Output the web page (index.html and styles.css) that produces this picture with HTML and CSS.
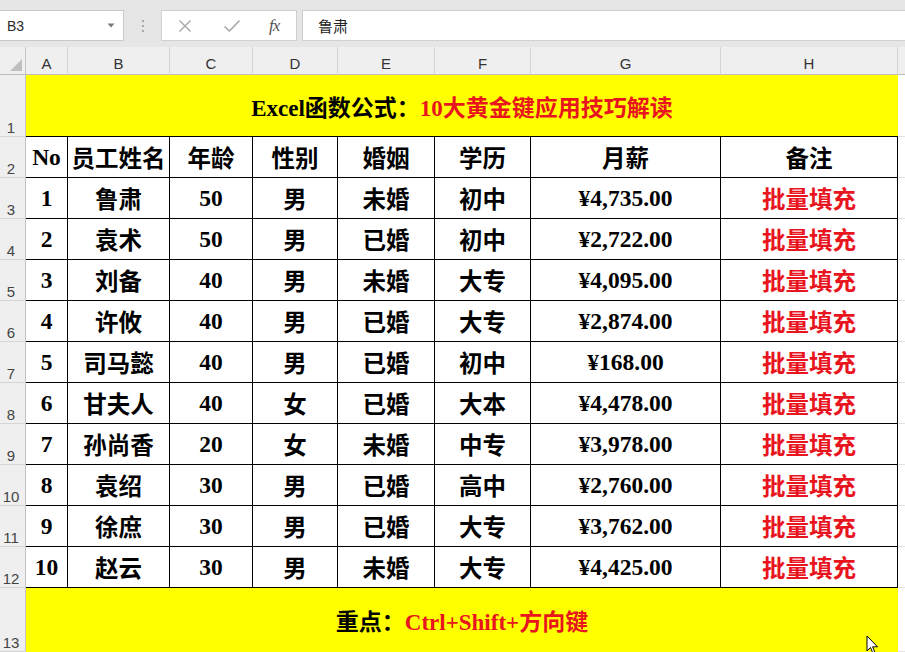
FILE: index.html
```html
<!DOCTYPE html>
<html lang="zh">
<head>
<meta charset="utf-8">
<title>Excel</title>
<link rel="stylesheet" href="styles.css">
</head>
<body>
<div class="app">
  <div class="toolbar">
    <div class="namebox"><span>B3</span>
      <svg width="8" height="5" viewBox="0 0 8 5"><path d="M0.5 0.5 L7.5 0.5 L4 4.5 Z" fill="#7a7a7a"/></svg>
    </div>
    <div class="dots">
      <svg width="4" height="14" viewBox="0 0 4 14"><circle cx="2" cy="2" r="1.1" fill="#9a9a9a"/><circle cx="2" cy="7" r="1.1" fill="#9a9a9a"/><circle cx="2" cy="12" r="1.1" fill="#9a9a9a"/></svg>
    </div>
    <div class="fxbox">
      <svg class="ic-x" width="14" height="14" viewBox="0 0 14 14"><path d="M1.5 1.5 L12.5 12.5 M12.5 1.5 L1.5 12.5" stroke="#a6a6a6" stroke-width="1.4" fill="none"/></svg>
      <svg class="ic-ok" width="18" height="14" viewBox="0 0 18 14"><path d="M1.5 7.5 L6.5 12 L16.5 1.5" stroke="#a6a6a6" stroke-width="1.6" fill="none"/></svg>
      <span class="fx">fx</span>
    </div>
    <div class="formula">鲁肃</div>
  </div>

  <div class="sheet">
    <div class="corner"><svg width="12" height="12" viewBox="0 0 12 12"><path d="M12 0 L12 12 L0 12 Z" fill="#bfbfbf"/></svg></div>
    <div class="ch">A</div><div class="ch">B</div><div class="ch">C</div><div class="ch">D</div>
    <div class="ch">E</div><div class="ch">F</div><div class="ch">G</div><div class="ch">H</div><div class="ch ch-ex"></div>

    <div class="rh">1</div>
    <div class="title">Excel函数公式：<span class="red">10大黄金键应用技巧解读</span></div>
    <div class="ex"></div>

    <div class="rh">2</div>
    <div class="c">No</div><div class="c">员工姓名</div><div class="c">年龄</div><div class="c">性别</div><div class="c">婚姻</div><div class="c">学历</div><div class="c">月薪</div><div class="c">备注</div><div class="ex"></div>

    <div class="rh">3</div>
    <div class="c">1</div><div class="c">鲁肃</div><div class="c">50</div><div class="c">男</div><div class="c">未婚</div><div class="c">初中</div><div class="c">¥4,735.00</div><div class="c red">批量填充</div><div class="ex"></div>

    <div class="rh">4</div>
    <div class="c">2</div><div class="c">袁术</div><div class="c">50</div><div class="c">男</div><div class="c">已婚</div><div class="c">初中</div><div class="c">¥2,722.00</div><div class="c red">批量填充</div><div class="ex"></div>

    <div class="rh">5</div>
    <div class="c">3</div><div class="c">刘备</div><div class="c">40</div><div class="c">男</div><div class="c">未婚</div><div class="c">大专</div><div class="c">¥4,095.00</div><div class="c red">批量填充</div><div class="ex"></div>

    <div class="rh">6</div>
    <div class="c">4</div><div class="c">许攸</div><div class="c">40</div><div class="c">男</div><div class="c">已婚</div><div class="c">大专</div><div class="c">¥2,874.00</div><div class="c red">批量填充</div><div class="ex"></div>

    <div class="rh">7</div>
    <div class="c">5</div><div class="c">司马懿</div><div class="c">40</div><div class="c">男</div><div class="c">已婚</div><div class="c">初中</div><div class="c">¥168.00</div><div class="c red">批量填充</div><div class="ex"></div>

    <div class="rh">8</div>
    <div class="c">6</div><div class="c">甘夫人</div><div class="c">40</div><div class="c">女</div><div class="c">已婚</div><div class="c">大本</div><div class="c">¥4,478.00</div><div class="c red">批量填充</div><div class="ex"></div>

    <div class="rh">9</div>
    <div class="c">7</div><div class="c">孙尚香</div><div class="c">20</div><div class="c">女</div><div class="c">未婚</div><div class="c">中专</div><div class="c">¥3,978.00</div><div class="c red">批量填充</div><div class="ex"></div>

    <div class="rh">10</div>
    <div class="c">8</div><div class="c">袁绍</div><div class="c">30</div><div class="c">男</div><div class="c">已婚</div><div class="c">高中</div><div class="c">¥2,760.00</div><div class="c red">批量填充</div><div class="ex"></div>

    <div class="rh">11</div>
    <div class="c">9</div><div class="c">徐庶</div><div class="c">30</div><div class="c">男</div><div class="c">已婚</div><div class="c">大专</div><div class="c">¥3,762.00</div><div class="c red">批量填充</div><div class="ex"></div>

    <div class="rh">12</div>
    <div class="c">10</div><div class="c">赵云</div><div class="c">30</div><div class="c">男</div><div class="c">未婚</div><div class="c">大专</div><div class="c">¥4,425.00</div><div class="c red">批量填充</div><div class="ex"></div>

    <div class="rh">13</div>
    <div class="foot">重点：<span class="red">Ctrl+Shift+方向键</span></div>
    <div class="ex"></div>
  </div>

  <svg class="cursor" width="13" height="20" viewBox="0 0 13 20"><path d="M1 1 L1 16 L4.5 12.5 L7 18.5 L9 17.6 L6.6 11.8 L11.5 11.8 Z" fill="#fff" stroke="#000" stroke-width="1" stroke-linejoin="round"/></svg>
</div>
</body>
</html>
```

FILE: styles.css
```css
* { box-sizing: border-box; }

body {
  margin: 0;
  background: #e6e6e6;
  font-family: "Liberation Sans", "Noto Sans CJK SC", sans-serif;
  overflow: hidden;
}

.app {
  position: relative;
  width: 905px;
  height: 652px;
  overflow: hidden;
}

/* ---------- formula bar ---------- */
.toolbar {
  display: flex;
  align-items: flex-start;
  height: 47px;
  padding-top: 10px;
}

.namebox {
  width: 125px;
  height: 31px;
  margin-left: -1px;
  background: #fff;
  border: 1px solid #c9c9c9;
  display: flex;
  align-items: center;
  justify-content: space-between;
  padding: 0 8px 0 7px;
  font-size: 14px;
  color: #2a2a2a;
}

.dots {
  width: 37px;
  height: 31px;
  display: flex;
  align-items: center;
  justify-content: center;
}

.fxbox {
  width: 136px;
  height: 31px;
  background: #fff;
  border: 1px solid #d0d0d0;
  display: flex;
  align-items: center;
  padding-left: 16px;
}

.ic-x { margin-right: 31px; }
.ic-ok { margin-right: 28px; }

.fx {
  font-family: "Liberation Serif", serif;
  font-style: italic;
  font-size: 17px;
  color: #555;
  letter-spacing: -1px;
}

.formula {
  flex: 1;
  height: 31px;
  margin-left: 5px;
  margin-right: -1px;
  background: #fff;
  border: 1px solid #d0d0d0;
  display: flex;
  align-items: center;
  padding-left: 15px;
  font-family: "Noto Sans CJK SC", sans-serif;
  font-size: 15px;
  color: #222;
}

/* ---------- sheet grid ---------- */
.sheet {
  display: grid;
  grid-template-columns: 26px 42px 102px 83px 85px 97px 96px 190px 177px 7px;
  grid-template-rows: 28px 62px repeat(11, 41px) 64px;
  background: #fff;
}

.corner {
  background: #efefef;
  border-right: 1px solid #c4c4c4;
  border-bottom: 1px solid #bdbdbd;
  display: flex;
  align-items: flex-end;
  justify-content: flex-end;
  padding: 0 3px 3px 0;
}

.ch {
  background: #efefef;
  border-right: 1px solid #d4d4d4;
  border-bottom: 1px solid #bdbdbd;
  display: flex;
  align-items: center;
  justify-content: center;
  padding-top: 5px;
  font-size: 15px;
  color: #333;
}

.rh {
  background: #efefef;
  border-right: 1px solid #c4c4c4;
  border-bottom: 1px solid #d6d6d6;
  display: flex;
  align-items: flex-end;
  justify-content: center;
  padding-right: 3px;
  font-size: 15px;
  line-height: 16px;
  color: #444;
}

.title,
.foot {
  grid-column: 2 / 10;
  background: #ffff00;
  display: flex;
  align-items: center;
  justify-content: center;
  font-family: "Liberation Serif", "Noto Sans CJK SC", serif;
  font-weight: bold;
  font-size: 23px;
  color: #000;
}

.title { border-bottom: 1px solid #000; }

.c {
  background: #fff;
  border-right: 1px solid #000;
  border-bottom: 1px solid #000;
  display: flex;
  align-items: center;
  justify-content: center;
  font-family: "Liberation Serif", "Noto Sans CJK SC", serif;
  font-weight: bold;
  font-size: 23.5px;
  color: #000;
  white-space: nowrap;
}

.ex {
  background: #fff;
  border-bottom: 1px solid #e2e2e2;
}

.ch-ex { border-right: 0; }

.red { color: #e8141e; }

.cursor {
  position: absolute;
  left: 866px;
  top: 635px;
}
```
